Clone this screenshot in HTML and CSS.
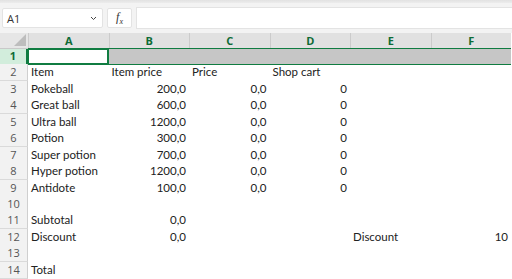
FILE: index.html
```html
<!DOCTYPE html>
<html lang="en">
<head>
    <meta charset="UTF-8">
    <title>Shop cart</title>
    <link rel="stylesheet" href="styles.css">
</head>
<body>
    <div class="topbar"></div>
    <div class="toolbar">
        <div class="namebox">
            <span>A1</span>
            <svg class="chevron" width="7" height="5" viewBox="0 0 7 5"><path d="M1 1 L3.5 3.5 L6 1" fill="none" stroke="#444" stroke-width="1"/></svg>
        </div>
        <div class="fxbox"><span class="fx">f<sub>x</sub></span></div>
        <div class="formula"></div>
    </div>

    <div class="sheet">
        <div class="row head">
            <div class="corner"><span class="tri"></span></div>
            <div class="colhead">A</div>
            <div class="colhead">B</div>
            <div class="colhead">C</div>
            <div class="colhead">D</div>
            <div class="colhead">E</div>
            <div class="colhead">F</div>
        </div>
        <div class="row selected">
            <div class="rowhead">1</div>
            <div class="cell active"></div>
            <div class="cell"></div>
            <div class="cell"></div>
            <div class="cell"></div>
            <div class="cell"></div>
            <div class="cell last"></div>
        </div>
        <div class="row">
            <div class="rowhead">2</div>
            <div class="cell">Item</div>
            <div class="cell">Item price</div>
            <div class="cell">Price</div>
            <div class="cell">Shop cart</div>
            <div class="cell"></div>
            <div class="cell"></div>
        </div>
        <div class="row">
            <div class="rowhead">3</div>
            <div class="cell">Pokeball</div>
            <div class="cell num">200,0</div>
            <div class="cell num">0,0</div>
            <div class="cell num">0</div>
            <div class="cell"></div>
            <div class="cell"></div>
        </div>
        <div class="row">
            <div class="rowhead">4</div>
            <div class="cell">Great ball</div>
            <div class="cell num">600,0</div>
            <div class="cell num">0,0</div>
            <div class="cell num">0</div>
            <div class="cell"></div>
            <div class="cell"></div>
        </div>
        <div class="row">
            <div class="rowhead">5</div>
            <div class="cell">Ultra ball</div>
            <div class="cell num">1200,0</div>
            <div class="cell num">0,0</div>
            <div class="cell num">0</div>
            <div class="cell"></div>
            <div class="cell"></div>
        </div>
        <div class="row">
            <div class="rowhead">6</div>
            <div class="cell">Potion</div>
            <div class="cell num">300,0</div>
            <div class="cell num">0,0</div>
            <div class="cell num">0</div>
            <div class="cell"></div>
            <div class="cell"></div>
        </div>
        <div class="row">
            <div class="rowhead">7</div>
            <div class="cell">Super potion</div>
            <div class="cell num">700,0</div>
            <div class="cell num">0,0</div>
            <div class="cell num">0</div>
            <div class="cell"></div>
            <div class="cell"></div>
        </div>
        <div class="row">
            <div class="rowhead">8</div>
            <div class="cell">Hyper potion</div>
            <div class="cell num">1200,0</div>
            <div class="cell num">0,0</div>
            <div class="cell num">0</div>
            <div class="cell"></div>
            <div class="cell"></div>
        </div>
        <div class="row">
            <div class="rowhead">9</div>
            <div class="cell">Antidote</div>
            <div class="cell num">100,0</div>
            <div class="cell num">0,0</div>
            <div class="cell num">0</div>
            <div class="cell"></div>
            <div class="cell"></div>
        </div>
        <div class="row">
            <div class="rowhead">10</div>
            <div class="cell"></div>
            <div class="cell"></div>
            <div class="cell"></div>
            <div class="cell"></div>
            <div class="cell"></div>
            <div class="cell"></div>
        </div>
        <div class="row">
            <div class="rowhead">11</div>
            <div class="cell">Subtotal</div>
            <div class="cell num">0,0</div>
            <div class="cell"></div>
            <div class="cell"></div>
            <div class="cell"></div>
            <div class="cell"></div>
        </div>
        <div class="row">
            <div class="rowhead">12</div>
            <div class="cell">Discount</div>
            <div class="cell num">0,0</div>
            <div class="cell"></div>
            <div class="cell"></div>
            <div class="cell">Discount</div>
            <div class="cell num">10</div>
        </div>
        <div class="row">
            <div class="rowhead">13</div>
            <div class="cell"></div>
            <div class="cell"></div>
            <div class="cell"></div>
            <div class="cell"></div>
            <div class="cell"></div>
            <div class="cell"></div>
        </div>
        <div class="row">
            <div class="rowhead">14</div>
            <div class="cell">Total</div>
            <div class="cell"></div>
            <div class="cell"></div>
            <div class="cell"></div>
            <div class="cell"></div>
            <div class="cell"></div>
        </div>
    </div>
</body>
</html>
```

FILE: styles.css
```css
body {
    margin: 0;
    width: 512px;
    height: 279px;
    overflow: hidden;
    background-color: #ffffff;
    font-family: Lato, 'Open Sans', sans-serif;
    color: #222;
}
.topbar {
    height: 3px;
    background: linear-gradient(#e2e2e2, #ececec);
}
.toolbar {
    display: flex;
    align-items: center;
    gap: 4px;
    height: 30px;
    padding: 0 0 0 2px;
    background-color: #f3f3f3;
}
.namebox {
    display: flex;
    align-items: center;
    justify-content: space-between;
    box-sizing: border-box;
    width: 101px;
    height: 20px;
    padding: 0 5px 0 4px;
    background-color: #ffffff;
    border: 1px solid #e3e3e3;
    border-radius: 2px;
    font-family: 'Open Sans', sans-serif;
    font-size: 11px;
    color: #333;
}
.fxbox {
    display: flex;
    align-items: center;
    justify-content: center;
    box-sizing: border-box;
    width: 25px;
    height: 20px;
    background-color: #ffffff;
    border: 1px solid #e3e3e3;
    border-radius: 2px;
}
.fx {
    font-family: 'Liberation Serif', serif;
    font-style: italic;
    font-size: 12px;
    color: #333;
}
.fx sub {
    font-size: 8px;
}
.formula {
    flex: 1;
    height: 20px;
    background-color: #ffffff;
    border: 1px solid #e3e3e3;
    border-right: none;
}
.row {
    display: grid;
    grid-template-columns: 28px repeat(6, 80.5px);
    height: 16.44px;
    font-size: 11.5px;
    line-height: 16px;
}
.row.head {
    height: 15px;
    line-height: 15px;
}
.corner {
    position: relative;
    background-color: #e6e6e6;
    border-bottom: 1px solid #c9c9c9;
}
.tri {
    position: absolute;
    right: 2px;
    bottom: 2px;
    width: 0;
    height: 0;
    border-left: 12px solid transparent;
    border-bottom: 12px solid #bdbdbd;
}
.colhead {
    text-align: center;
    font-family: 'Open Sans', sans-serif;
    font-size: 11px;
    font-weight: bold;
    color: #0e6b35;
    background-color: #e1e1e1;
    border-left: 1px solid #cbcbcb;
    border-bottom: 1px solid #c9c9c9;
}
.rowhead {
    box-sizing: border-box;
    text-align: center;
    font-family: 'Open Sans', sans-serif;
    font-size: 11px;
    color: #555;
    background-color: #f2f2f2;
    border-right: 1px solid #cfcfcf;
    border-bottom: 1px solid #dadada;
}
.cell {
    padding: 0 3px;
    white-space: nowrap;
    overflow: visible;
}
.cell.num {
    text-align: right;
}
.selected .rowhead {
    background-color: #d2eddc;
    color: #0e6b35;
    font-weight: bold;
    border-right: 2px solid #107c41;
}
.selected .cell {
    background-color: #c6c6c6;
    border-top: 1px solid #107c41;
    border-bottom: 1px solid #107c41;
}
.selected .cell.active {
    background-color: #ffffff;
    border: 2px solid #107c41;
    border-left-width: 1px;
}
```
